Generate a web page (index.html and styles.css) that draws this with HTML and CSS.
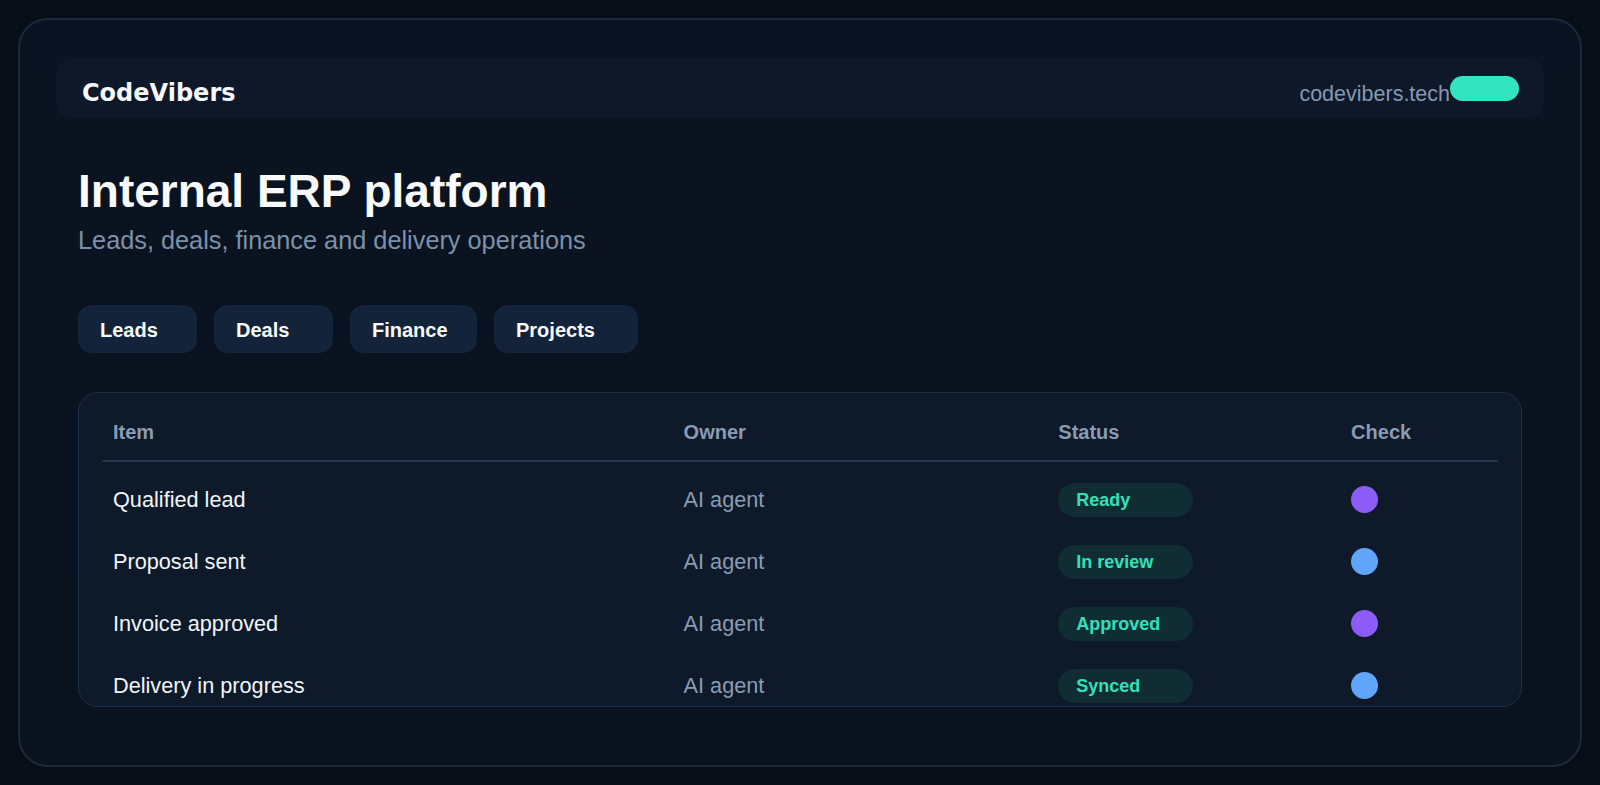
FILE: index.html
```html
<!DOCTYPE html>
<html lang="en">
<head>
    <meta charset="UTF-8">
    <title>CodeVibers - Internal ERP platform</title>
    <link rel="stylesheet" href="styles.css">
</head>
<body>

    <!-- outer frame -->
    <div class="frame">

        <!-- top bar -->
        <header class="topbar">
            <div class="logo">CodeVibers</div>
            <div class="site">codevibers.tech<span class="site-pill"></span></div>
        </header>

        <main class="workspace">
            <!-- title -->
            <div class="intro">
                <h1 class="intro-title">Internal ERP platform</h1>
                <p class="intro-sub">Leads, deals, finance and delivery operations</p>
            </div>

            <!-- module tabs -->
            <nav class="tabs">
                <button class="tab">Leads</button>
                <button class="tab">Deals</button>
                <button class="tab">Finance</button>
                <button class="tab">Projects</button>
            </nav>

            <!-- pipeline table -->
            <div class="table-card">
                <div class="row row-head">
                    <div class="cell">Item</div>
                    <div class="cell">Owner</div>
                    <div class="cell">Status</div>
                    <div class="cell">Check</div>
                </div>
                <div class="row">
                    <div class="cell cell-item">Qualified lead</div>
                    <div class="cell cell-owner">AI agent</div>
                    <div class="cell"><span class="badge">Ready</span></div>
                    <div class="cell"><span class="dot dot-violet"></span></div>
                </div>
                <div class="row">
                    <div class="cell cell-item">Proposal sent</div>
                    <div class="cell cell-owner">AI agent</div>
                    <div class="cell"><span class="badge">In review</span></div>
                    <div class="cell"><span class="dot dot-blue"></span></div>
                </div>
                <div class="row">
                    <div class="cell cell-item">Invoice approved</div>
                    <div class="cell cell-owner">AI agent</div>
                    <div class="cell"><span class="badge">Approved</span></div>
                    <div class="cell"><span class="dot dot-violet"></span></div>
                </div>
                <div class="row">
                    <div class="cell cell-item">Delivery in progress</div>
                    <div class="cell cell-owner">AI agent</div>
                    <div class="cell"><span class="badge">Synced</span></div>
                    <div class="cell"><span class="dot dot-blue"></span></div>
                </div>
            </div>
        </main>

    </div>

</body>
</html>
```

FILE: styles.css
```css
/* base */
* {
    box-sizing: border-box;
}

html, body {
    height: 100%;
}

body {
    margin: 0;
    padding: 18px;
    background: #070e18;
    font-family: "Liberation Sans", Arial, sans-serif;
    color: #f1f5f9;
}

.frame {
    display: flex;
    flex-direction: column;
    height: 100%;
    padding: 38px 36px 36px;
    border: 2px solid #1d293a;
    border-radius: 30px;
    background: linear-gradient(180deg, #0a1321 0%, #0a121e 100%);
    overflow: hidden;
}

/* top bar */
.topbar {
    display: flex;
    justify-content: space-between;
    align-items: baseline;
    flex-shrink: 0;
    height: 60px;
    padding: 18px 25px 0 26px;
    border-radius: 16px;
    background: #0e1829;
}

.logo {
    font-family: "DejaVu Sans", sans-serif;
    font-size: 24px;
    font-weight: bold;
    color: #f4f7fb;
}

.site {
    font-size: 21.5px;
    color: #8598b1;
}

.site-pill {
    display: inline-block;
    width: 69px;
    height: 25px;
    border-radius: 13px;
    background: #33e4c1;
}

/* main area */
.workspace {
    display: flex;
    flex-direction: column;
    flex: 1;
    min-height: 0;
    padding: 0 22px 22px;
}

.intro-title {
    margin: 48px 0 0;
    font-size: 46px;
    line-height: 1.1;
    font-weight: bold;
    color: #f8fafc;
}

.intro-sub {
    margin: 9px 0 0;
    font-size: 25.3px;
    color: #7d91ab;
}

.tabs {
    display: grid;
    grid-template-columns: 119px 119px 127px 144px;
    gap: 17px;
    margin-top: 50px;
}

.tab {
    height: 48px;
    padding: 3px 22px 0;
    border: none;
    border-radius: 14px;
    background: #13233a;
    font-family: inherit;
    font-size: 20px;
    font-weight: bold;
    color: #f8fafc;
    text-align: left;
}

/* table */
.table-card {
    flex: 1;
    min-height: 0;
    margin-top: 39px;
    padding: 12px 23px 0;
    border: 1px solid #1d3049;
    border-radius: 20px;
    background: #0e1929;
    overflow: hidden;
}

.row {
    display: grid;
    grid-template-columns: 571fr 375fr 293fr 158fr;
    align-items: center;
    height: 62px;
}

.row-head {
    height: auto;
    margin-bottom: 7px;
    padding: 16px 0;
    border-bottom: 2px solid #24374f;
    font-weight: bold;
    color: #8a9bb3;
}

.cell {
    padding-left: 11px;
    font-size: 21.7px;
}

.row-head .cell {
    font-size: 20px;
}

.cell-item {
    color: #f1f5f9;
}

.cell-owner {
    color: #8a9cb3;
}

.badge {
    display: inline-block;
    width: 135px;
    height: 34px;
    padding: 0 18px;
    border-radius: 17px;
    background: #0f2d33;
    font-size: 18px;
    font-weight: bold;
    line-height: 34px;
    color: #33e0b9;
}

.dot {
    display: block;
    width: 27px;
    height: 27px;
    border-radius: 50%;
}

.dot-violet {
    background: #8b5cf6;
}

.dot-blue {
    background: #60a5fa;
}
```
